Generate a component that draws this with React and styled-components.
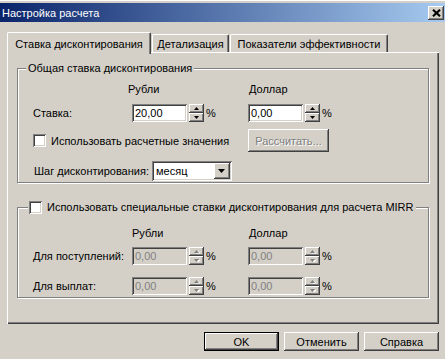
import React from 'react';
import styled, { createGlobalStyle, css } from 'styled-components';

const GlobalStyle = createGlobalStyle`
  html, body {
    margin: 0;
    padding: 0;
  }
  body {
    font-family: "Liberation Sans", Tahoma, Arial, sans-serif;
    font-size: 11px;
    color: #000;
    background: #d4d0c8;
  }
  * {
    box-sizing: border-box;
  }
`;

// classic 3d edges
const raised = css`
  box-shadow: inset -1px -1px #404040, inset 1px 1px #fff, inset -2px -2px #808080;
`;

const sunken = css`
  box-shadow: inset 1px 1px #808080, inset -1px -1px #fff, inset 2px 2px #404040, inset -2px -2px #d4d0c8;
`;

const Window = styled.div`
  width: 445px;
  height: 359px;
  padding-top: 2px;
  background: #d4d0c8;
  border-top: 1px solid #fff;
  display: flex;
  flex-direction: column;
  overflow: hidden;
`;

const TitleBar = styled.div`
  height: 19px;
  display: flex;
  align-items: center;
  justify-content: space-between;
  padding: 0 1px 0 2px;
  background: linear-gradient(to right, #0a246a, #a6caf0);
  color: #fff;
  font-size: 11px;
`;

const CloseButton = styled.div`
  width: 16px;
  height: 14px;
  background: #d4d0c8;
  ${raised};
  display: flex;
  align-items: center;
  justify-content: center;
`;

const Body = styled.div`
  padding: 10px 6px 0 7px;
  display: flex;
  flex-direction: column;
`;

const TabStrip = styled.div`
  height: 20px;
  display: flex;
  align-items: flex-end;
  position: relative;
  z-index: 1;
`;

const Tab = styled.div`
  width: ${p => p.$w}px;
  margin-left: ${p => p.$ml || 0}px;
  height: ${p => (p.$active ? 22 : 18)}px;
  margin-bottom: ${p => (p.$active ? -2 : 0)}px;
  padding-top: ${p => (p.$active ? 4 : 2)}px;
  line-height: 14px;
  text-align: center;
  white-space: nowrap;
  background: #d4d0c8;
  border-top: 1px solid #fff;
  border-left: 1px solid #fff;
  border-right: 1px solid #404040;
  border-radius: 2px 2px 0 0;
  box-shadow: inset -1px 0 #808080;
`;

const Panel = styled.div`
  height: 272px;
  padding: 16px 10px 0 10px;
  display: flex;
  flex-direction: column;
  box-shadow: inset 1px 1px #fff, inset -1px -1px #404040, inset -2px -2px #808080;
`;

const GroupBox = styled.div`
  margin-top: ${p => p.$mt || 0}px;
  padding: 0 0 ${p => p.$pb || 0}px 15px;
  border: 1px solid #808080;
  box-shadow: 1px 1px 0 #fff, inset 1px 1px 0 #fff;
`;

const Legend = styled.div`
  width: fit-content;
  margin: -8px 0 0 ${p => p.$ml}px;
  padding: 0 2px 0 ${p => p.$pl || 2}px;
  height: 14px;
  line-height: 14px;
  background: #d4d0c8;
  display: flex;
  align-items: center;
  gap: 5px;
  white-space: nowrap;
`;

const Grid = styled.div`
  display: grid;
  grid-template-columns: 99px 116px auto;
  align-items: center;
  margin-top: ${p => p.$mt}px;
  height: ${p => p.$h}px;
`;

const Label = styled.div`
  white-space: nowrap;
  line-height: 14px;
  padding-left: ${p => p.$pl || 0}px;
`;

const Header = styled.div`
  line-height: 14px;
  margin-left: ${p => p.$shift || 0}px;
`;

const Field = styled.div`
  display: flex;
  align-items: center;
  gap: 2px;
`;

const Edit = styled.div`
  width: 55px;
  height: 18px;
  padding: 0 3px;
  line-height: 18px;
  background: ${p => (p.$disabled ? '#d4d0c8' : '#fff')};
  color: ${p => (p.$disabled ? '#808080' : '#000')};
  ${sunken};
`;

const Spin = styled.div`
  width: 15px;
  height: 18px;
  display: flex;
  flex-direction: column;
`;

const SpinHalf = styled.div`
  height: 9px;
  background: #d4d0c8;
  display: flex;
  align-items: center;
  justify-content: center;
  ${raised};
`;

const Percent = styled.span`
  line-height: 14px;
`;

const CheckRow = styled.div`
  display: flex;
  align-items: center;
  gap: 5px;
  grid-column: 1 / span 2;
  margin-left: ${p => p.$ml || 0}px;
`;

const CheckBox = styled.div`
  width: 13px;
  height: 13px;
  flex: none;
  background: #fff;
  ${sunken};
`;

const Button = styled.div`
  width: ${p => p.$w}px;
  height: ${p => p.$h}px;
  display: flex;
  align-items: center;
  justify-content: center;
  background: #d4d0c8;
  white-space: nowrap;
  color: ${p => (p.$disabled ? '#808080' : '#000')};
  text-shadow: ${p => (p.$disabled ? '1px 1px 0 #fff' : 'none')};
  ${p =>
    p.$default
      ? css`
          box-shadow: inset 0 0 0 1px #000, inset -2px -2px #404040, inset 2px 2px #fff, inset -3px -3px #808080;
        `
      : raised};
`;

const SelectRow = styled.div`
  display: flex;
  align-items: center;
  margin-top: 9px;
  height: 20px;
`;

const Select = styled.div`
  width: 80px;
  height: 20px;
  padding: 2px 2px 2px 4px;
  display: flex;
  align-items: center;
  justify-content: space-between;
  background: #fff;
  ${sunken};
`;

const DropButton = styled.div`
  width: 16px;
  height: 16px;
  background: #d4d0c8;
  display: flex;
  align-items: center;
  justify-content: center;
  ${raised};
`;

const ButtonRow = styled.div`
  display: flex;
  justify-content: flex-end;
  gap: 5px;
  margin-top: 8px;
`;

const Arrow = ({ up, disabled, w = 5 }) => (
  <svg width={w + 1} height={Math.ceil(w / 2) + 1} style={{ display: 'block' }}>
    {disabled && (
      <polygon
        points={up ? `${1 + 0.5},${w / 2 + 1} ${w / 2 + 1.5},1 ${w + 0.5 + 1},${w / 2 + 1}` : `1.5,1 ${w + 1.5},1 ${w / 2 + 1.5},${w / 2 + 1}`}
        fill="#fff"
      />
    )}
    <polygon
      points={up ? `0,${w / 2 + 0.5} ${w / 2},0 ${w},${w / 2 + 0.5}` : `0,0 ${w},0 ${w / 2},${w / 2 + 0.5}`}
      fill={disabled ? '#808080' : '#000'}
    />
  </svg>
);

const SpinBox = ({ value, disabled }) => (
  <Field>
    <Edit $disabled={disabled}>{value}</Edit>
    <Spin>
      <SpinHalf>
        <Arrow up disabled={disabled} />
      </SpinHalf>
      <SpinHalf>
        <Arrow disabled={disabled} />
      </SpinHalf>
    </Spin>
    <Percent>%</Percent>
  </Field>
);

export default function App() {
  return (
    <>
      <GlobalStyle />
      <Window>
        <TitleBar>
          <span>Настройка расчета</span>
          <CloseButton>
            <svg width="9" height="8" viewBox="0 0 9 8">
              <path d="M1 0.8 L8 7.2 M8 0.8 L1 7.2" stroke="#000" strokeWidth="2.2" />
            </svg>
          </CloseButton>
        </TitleBar>
        <Body>
          <TabStrip>
            <Tab $active $w={144}>Ставка дисконтирования</Tab>
            <Tab $w={77} $ml={1}>Детализация</Tab>
            <Tab $w={158} $ml={1}>Показатели эффективности</Tab>
          </TabStrip>
          <Panel>
            <GroupBox $pb={1}>
              <Legend $ml={-7}>Общая ставка дисконтирования</Legend>
              <Grid $mt={7} $h={14}>
                <span />
                <Header $shift={-4}>Рубли</Header>
                <Header $shift={1}>Доллар</Header>
              </Grid>
              <Grid $mt={8} $h={18}>
                <Label>Ставка:</Label>
                <SpinBox value="20,00" />
                <SpinBox value="0,00" />
              </Grid>
              <Grid $mt={7} $h={23}>
                <CheckRow>
                  <CheckBox />
                  <Label>Использовать расчетные значения</Label>
                </CheckRow>
                <Button $w={81} $h={23} $disabled>Рассчитать...</Button>
              </Grid>
              <SelectRow>
                <Label $pl={1} style={{ width: 119 }}>Шаг дисконтирования:</Label>
                <Select>
                  <span>месяц</span>
                  <DropButton>
                    <Arrow w={7} />
                  </DropButton>
                </Select>
              </SelectRow>
            </GroupBox>

            <GroupBox $mt={24} $pb={2}>
              <Legend $ml={-5} $pl={1}>
                <CheckBox />
                <span>Использовать специальные ставки дисконтирования для расчета MIRR</span>
              </Legend>
              <Grid $mt={12} $h={14}>
                <span />
                <Header>Рубли</Header>
                <Header $shift={1}>Доллар</Header>
              </Grid>
              <Grid $mt={7} $h={18}>
                <Label>Для поступлений:</Label>
                <SpinBox value="0,00" disabled />
                <SpinBox value="0,00" disabled />
              </Grid>
              <Grid $mt={12} $h={18}>
                <Label>Для выплат:</Label>
                <SpinBox value="0,00" disabled />
                <SpinBox value="0,00" disabled />
              </Grid>
            </GroupBox>
          </Panel>
          <ButtonRow>
            <Button $w={75} $h={19} $default>OK</Button>
            <Button $w={75} $h={19}>Отменить</Button>
            <Button $w={75} $h={19}>Справка</Button>
          </ButtonRow>
        </Body>
      </Window>
    </>
  );
}
